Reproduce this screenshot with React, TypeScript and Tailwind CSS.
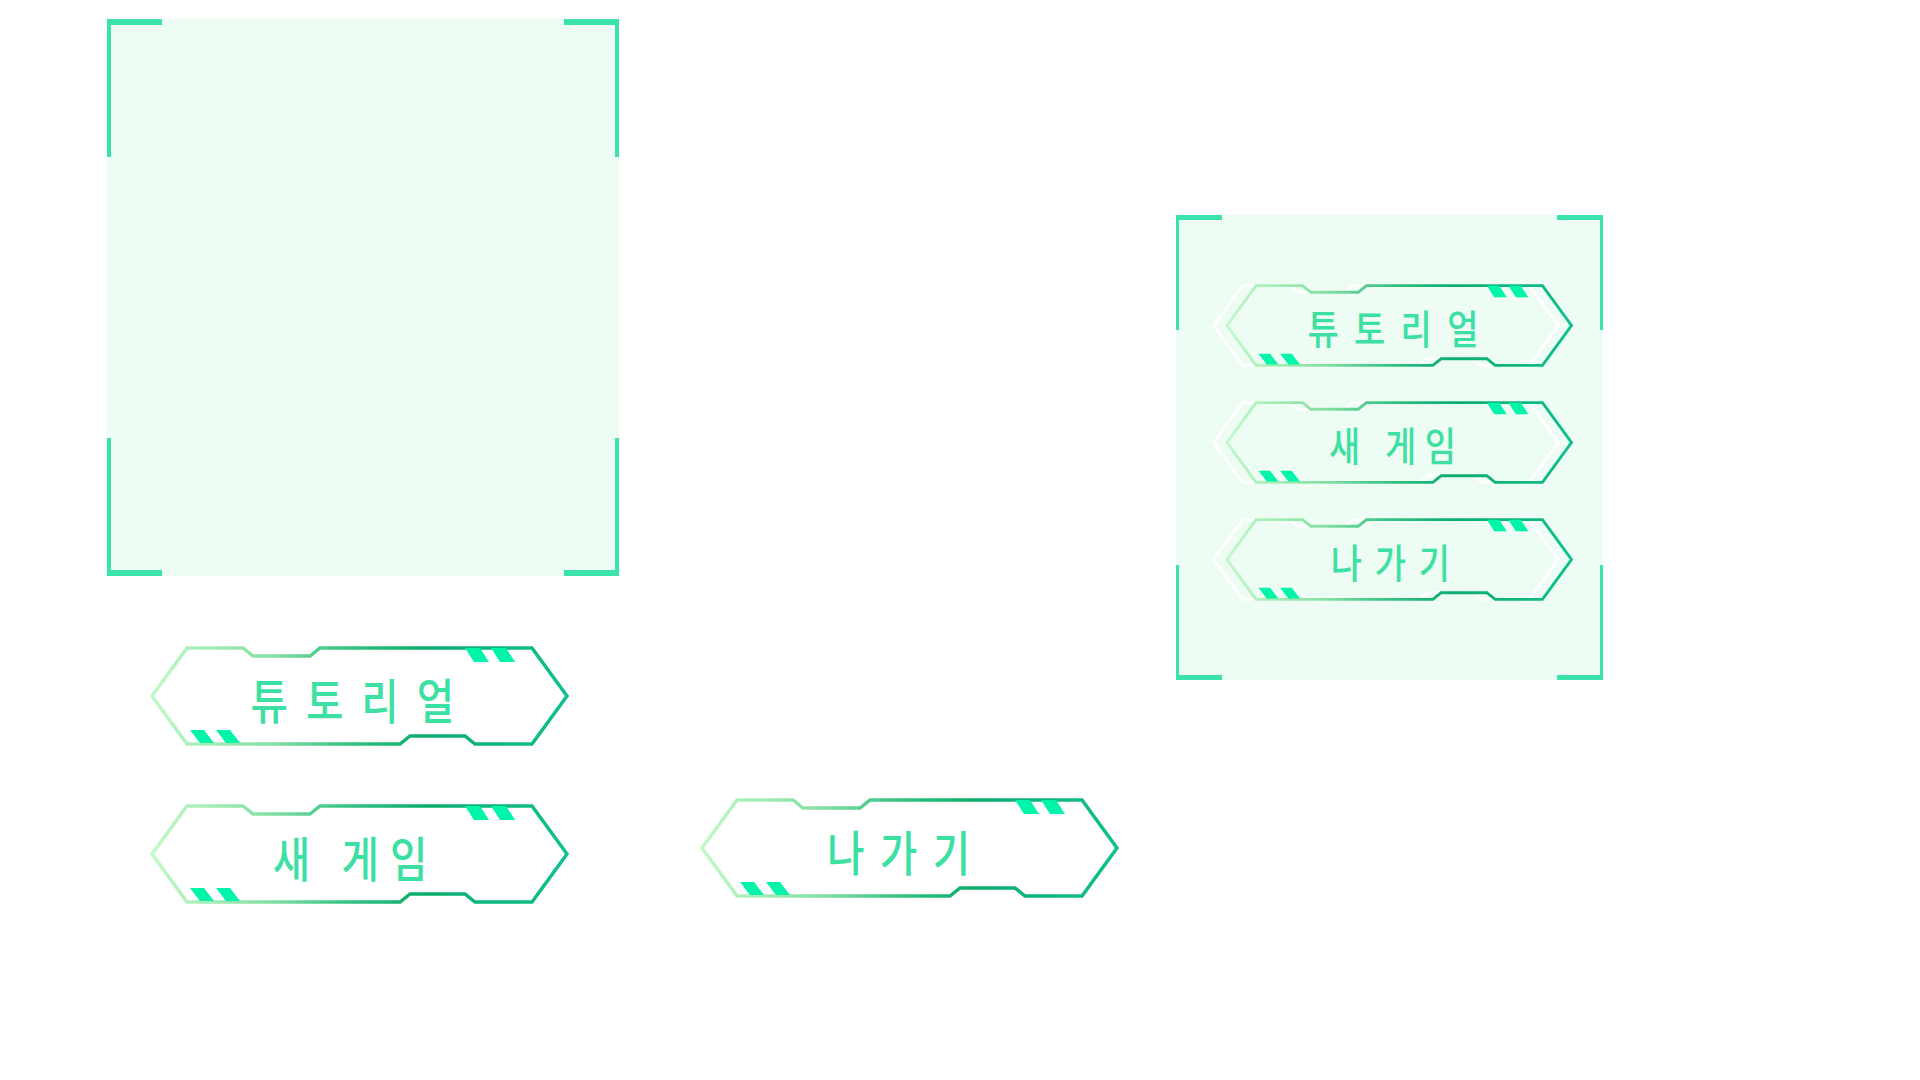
import type { ReactNode } from 'react';

const GREEN = 'M18 50 L53 2 L109 2 L119 10 L176 10 L186 2 L398 2 L433 50 L398 98 L341 98 L331 90 L276 90 L266 98 L53 98 Z';

interface ButtonProps {
  label: string;
  small?: boolean;
  // tracking + horizontal nudge, tuned per label
  textClass: string;
}

function HexButton({ label, small, textClass }: ButtonProps) {
  return (
    <div
      className={`relative flex shrink-0 items-center justify-center ${
        small ? 'h-[83px] w-[362px]' : 'h-[100px] w-[436px]'
      }`}
    >
      <svg
        className="absolute inset-0 h-full w-full"
        viewBox="0 0 436 100"
        preserveAspectRatio="none"
      >
        <defs>
          <linearGradient id="hexStroke" gradientUnits="userSpaceOnUse" x1="18" y1="0" x2="433" y2="0">
            <stop offset="0" stopColor="#c2f8c8" />
            <stop offset="0.28" stopColor="#86e0a3" />
            <stop offset="0.47" stopColor="#35c283" />
            <stop offset="0.66" stopColor="#09ad6c" />
            <stop offset="1" stopColor="#10c090" />
          </linearGradient>
        </defs>
        <path d={GREEN} transform="translate(-16 0)" fill="none" stroke="#ffffff" strokeWidth="3.5" />
        <path d={GREEN} fill="none" stroke="url(#hexStroke)" strokeWidth="3.5" />
        <polygon points="331,2 346,2 355,16 340,16" fill="#00f5ab" />
        <polygon points="357,2 372,2 381,16 366,16" fill="#00f5ab" />
        <polygon points="56,84 70,84 80,97 66,97" fill="#00f5ab" />
        <polygon points="82,84 96,84 106,97 92,97" fill="#00f5ab" />
      </svg>
      <span
        className={`relative scale-x-85 leading-none font-medium text-[#3de0a3] ${textClass} ${
          small ? 'mt-[3px] text-[40px]' : 'mt-[4px] text-[48px]'
        }`}
        style={{ fontFamily: '"Noto Sans CJK KR", "Noto Sans", sans-serif' }}
      >
        {label}
      </span>
    </div>
  );
}

interface PanelProps {
  small?: boolean;
  children?: ReactNode;
  className?: string;
}

function Panel({ small, children, className }: PanelProps) {
  const h = small ? 'w-[46px] h-[115px]' : 'w-[55px] h-[138px]';
  const tl = small
    ? 'border-[#3be3ac] border-t-[5px] border-l-[3px]'
    : 'border-[#3be3ac] border-t-[6px] border-l-[4px]';
  const tr = small
    ? 'border-[#3be3ac] border-t-[5px] border-r-[3px]'
    : 'border-[#3be3ac] border-t-[6px] border-r-[4px]';
  const bl = small
    ? 'border-[#3be3ac] border-b-[5px] border-l-[3px]'
    : 'border-[#3be3ac] border-b-[6px] border-l-[4px]';
  const br = small
    ? 'border-[#3be3ac] border-b-[5px] border-r-[3px]'
    : 'border-[#3be3ac] border-b-[6px] border-r-[4px]';
  return (
    <div className={`relative shrink-0 bg-[#eefdf4] ${className ?? ''}`}>
      <div className={`absolute left-0 top-0 ${h} ${tl}`} />
      <div className={`absolute right-0 top-0 ${h} ${tr}`} />
      <div className={`absolute bottom-0 left-0 ${h} ${bl}`} />
      <div className={`absolute bottom-0 right-0 ${h} ${br}`} />
      {children}
    </div>
  );
}

export default function App() {
  return (
    <div className="flex h-[1080px] w-[1920px] items-start overflow-hidden bg-white">
      <div className="ml-[107px] mt-[19px] flex w-[512px] shrink-0 flex-col">
        <Panel className="h-[557px] w-[512px]" />
        <div className="ml-[27px] mt-[70px] flex flex-col gap-[58px]">
          <HexButton label="튜토리얼" textClass="ml-[18px] tracking-[21px]" />
          <HexButton label="새 게임" textClass="ml-[8px] tracking-[13px]" />
        </div>
      </div>

      <div className="ml-[65px] mt-[798px]">
        <HexButton label="나가기" textClass="ml-[8px] tracking-[18px]" />
      </div>

      <Panel small className="ml-[56px] mt-[215px] flex h-[465px] w-[427px] flex-col items-center pl-[7px] pt-[69px]">
        <div className="flex flex-col gap-[34px]">
          <HexButton small label="튜토리얼" textClass="ml-[15px] tracking-[18px]" />
          <HexButton small label="새 게임" textClass="ml-[7px] tracking-[10px]" />
          <HexButton small label="나가기" textClass="ml-[7px] tracking-[15px]" />
        </div>
      </Panel>
    </div>
  );
}
